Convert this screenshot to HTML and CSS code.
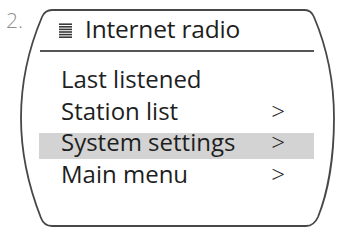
FILE: index.html
```html
<!DOCTYPE html>
<html>
<head>
<meta charset="utf-8">
<link rel="stylesheet" href="styles.css">
</head>
<body>
<div class="page">
  <svg class="frame" width="337" height="232" viewBox="0 0 337 232">
    <path d="M52 10 H305 Q311 10 314 17 C328 50 334 85 334 118 C334 160 327 195 318 217 Q314 226 306 226 H52 Q44 226 41 218 C30 190 21 155 21 118 C21 85 28 50 42 17 Q45 10 52 10 Z" fill="none" stroke="#474747" stroke-width="1.8"/>
  </svg>
  <div class="step">2.</div>
  <div class="screen">
    <div class="title">
      <svg class="icon" width="13" height="15" viewBox="0 0 13 15">
        <rect x="0" y="0.4" width="13" height="1.6" fill="#3a3a3a"/>
        <rect x="0" y="3.0" width="13" height="1.6" fill="#3a3a3a"/>
        <rect x="0" y="5.6" width="13" height="1.6" fill="#3a3a3a"/>
        <rect x="0" y="8.2" width="13" height="1.6" fill="#3a3a3a"/>
        <rect x="0" y="10.8" width="13" height="1.6" fill="#3a3a3a"/>
        <rect x="0" y="13.4" width="13" height="1.6" fill="#3a3a3a"/>
      </svg>
      <span>Internet radio</span>
    </div>
    <div class="rule"></div>
    <ul class="menu">
      <li class="item"><span>Last listened</span></li>
      <li class="item"><span>Station list</span><span class="arrow">&gt;</span></li>
      <li class="item selected"><span>System settings</span><span class="arrow">&gt;</span></li>
      <li class="item"><span>Main menu</span><span class="arrow">&gt;</span></li>
    </ul>
  </div>
</div>
</body>
</html>
```

FILE: styles.css
```css
html, body {
  margin: 0;
  padding: 0;
  background: #ffffff;
}

.page {
  position: relative;
  width: 337px;
  height: 232px;
  display: grid;
  grid-template-columns: 39px 275px;
  align-items: start;
  font-family: "Open Sans", "Liberation Sans", sans-serif;
  color: #1e1e1e;
}

.frame {
  position: absolute;
  left: 0;
  top: 0;
}

.step {
  padding: 10px 0 0 6px;
  font-size: 21px;
  line-height: 20px;
  font-weight: 300;
  color: #8f8f8f;
}

.screen {
  padding-top: 14.5px;
}

.title {
  display: flex;
  align-items: center;
  gap: 13px;
  padding-left: 20px;
  height: 28px;
  font-size: 24.5px;
  line-height: 28px;
  letter-spacing: -0.2px;
}

.title .icon {
  display: block;
  margin-top: 3px;
}

.rule {
  margin: 7.5px 0 0 1px;
  height: 2px;
  width: 274px;
  background: #555555;
}

.menu {
  list-style: none;
  margin: 18px 0 0 0;
  padding: 0;
  display: flex;
  flex-direction: column;
  gap: 5.5px;
}

.item {
  display: flex;
  justify-content: space-between;
  height: 18px;
  padding: 0 29px 8px 22px;
  font-size: 24px;
  line-height: 18px;
}

.item .arrow {
  font-weight: 300;
}

.item.selected {
  background: #d3d3d3;
}
```
